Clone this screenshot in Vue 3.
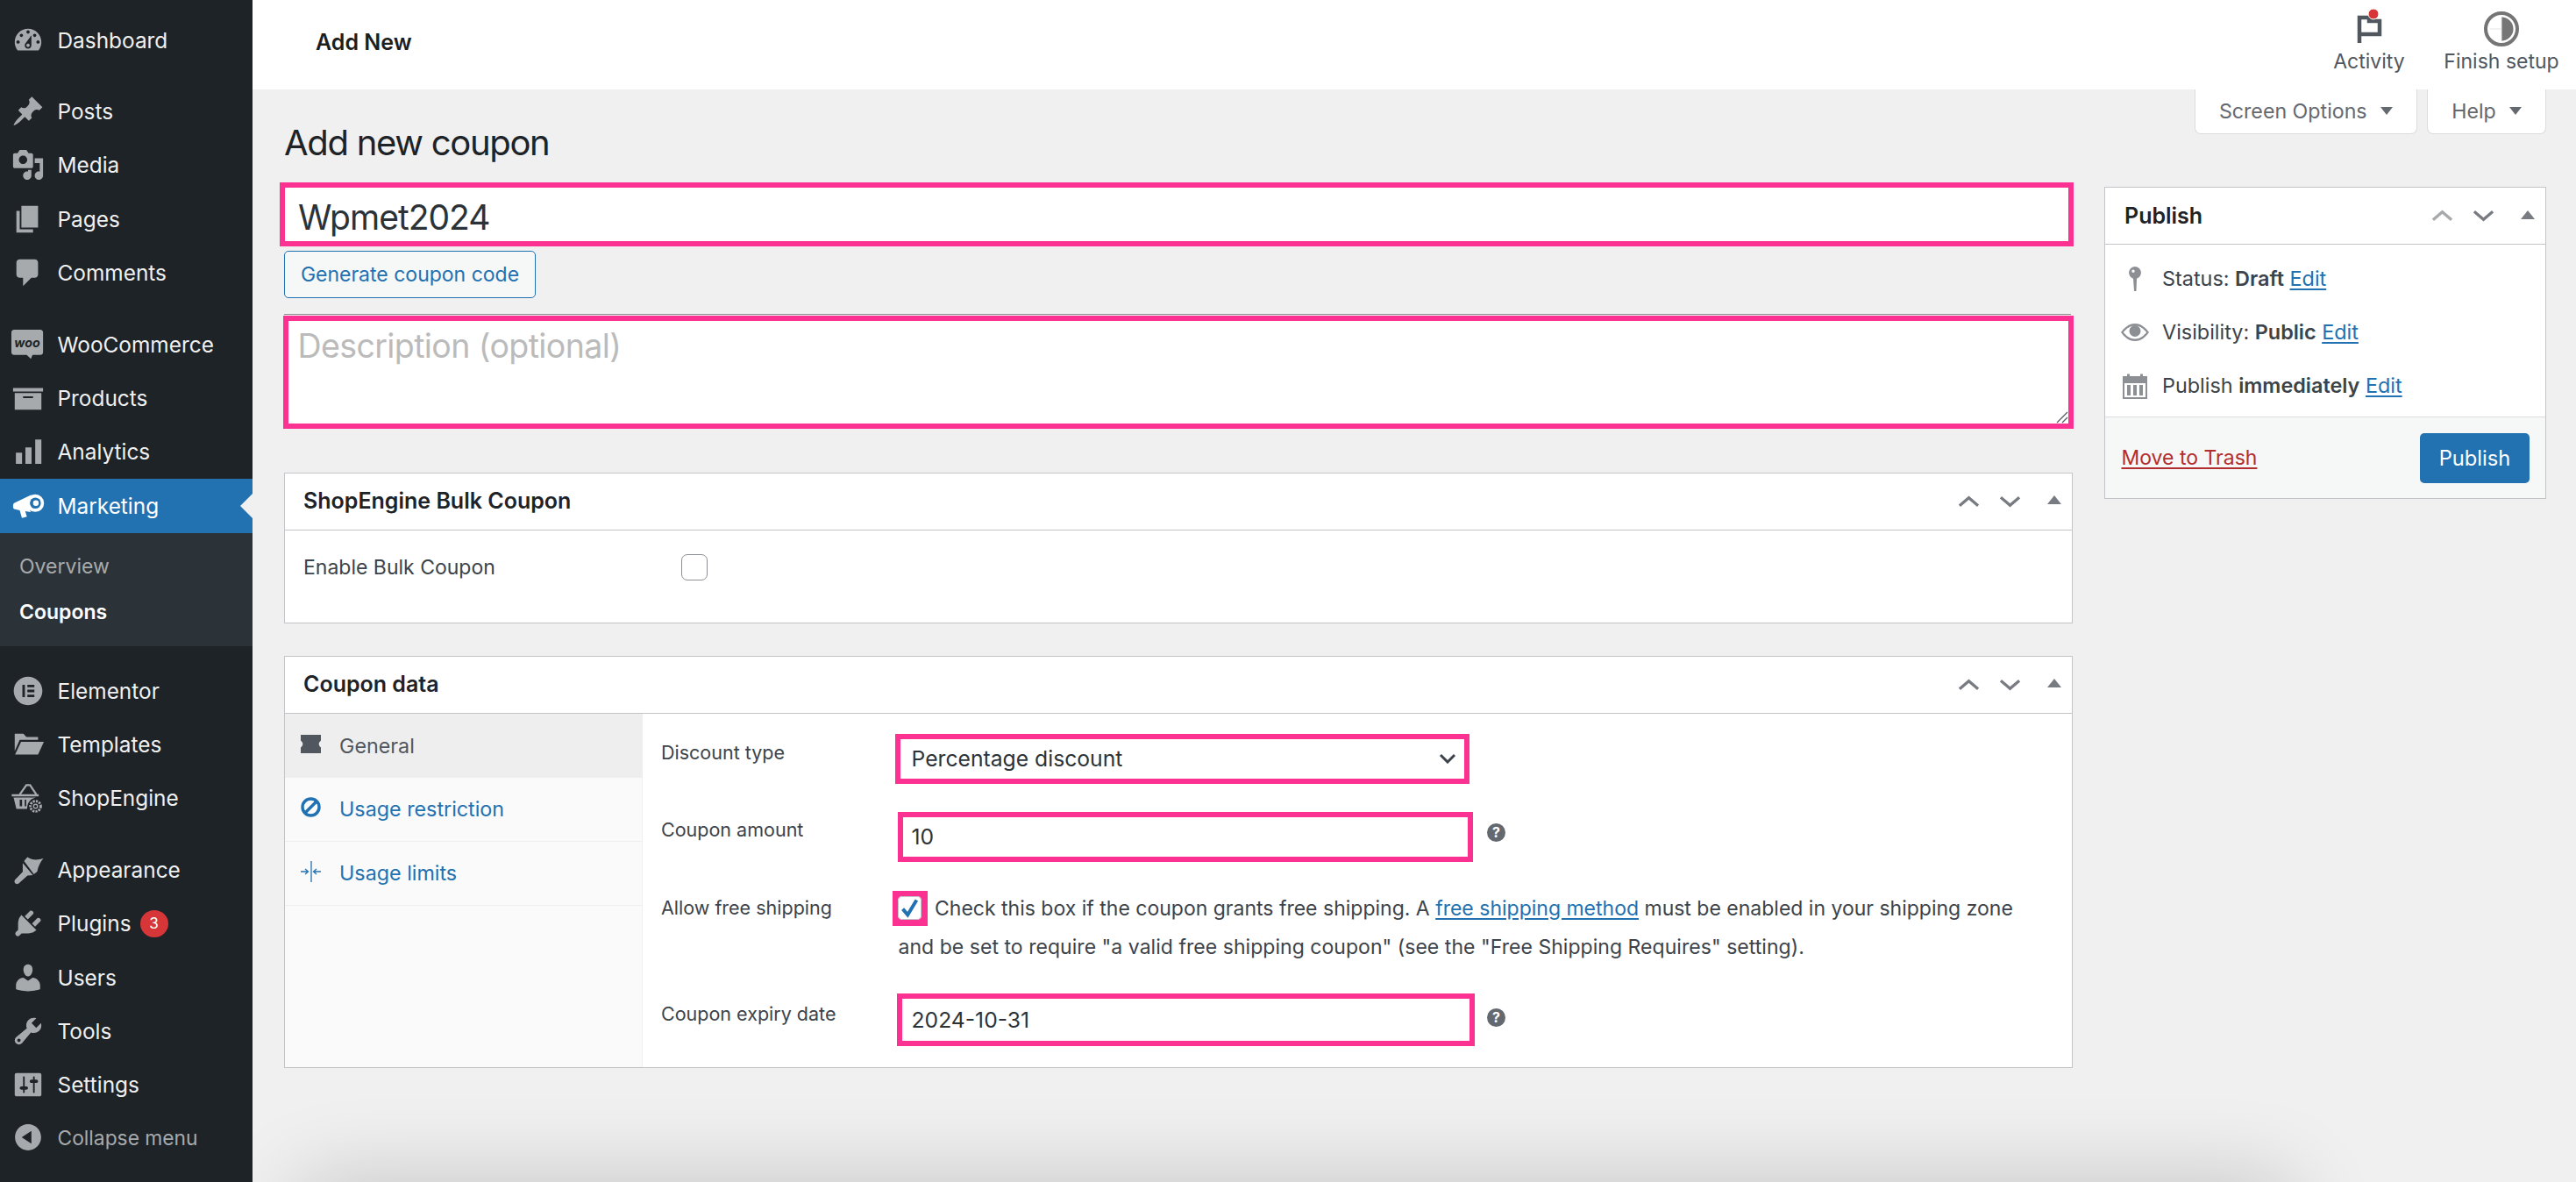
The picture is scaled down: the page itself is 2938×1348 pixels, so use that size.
<script setup>
const menu = [
  { label: 'Dashboard', d: 'M3.76 16h12.48c1.1-1.37 1.76-3.11 1.76-5 0-4.42-3.58-8-8-8s-8 3.58-8 8c0 1.89.66 3.63 1.76 5zM10 4c.55 0 1 .45 1 1s-.45 1-1 1-1-.45-1-1 .45-1 1-1zM6 6c.55 0 1 .45 1 1s-.45 1-1 1-1-.45-1-1 .45-1 1-1zm8 0c.55 0 1 .45 1 1s-.45 1-1 1-1-.45-1-1 .45-1 1-1zm-5.37 5.55L12 7v6c0 1.1-.9 2-2 2s-2-.9-2-2c0-.57.24-1.08.63-1.45zM4 10c.55 0 1 .45 1 1s-.45 1-1 1-1-.45-1-1 .45-1 1-1zm12 0c.55 0 1 .45 1 1s-.45 1-1 1-1-.45-1-1 .45-1 1-1zm-5 3c0-.55-.45-1-1-1s-1 .45-1 1 .45 1 1 1 1-.45 1-1z' },
  { label: 'Posts', sep: true, d: 'M10.44 3.02l1.82-1.82 6.36 6.35-1.83 1.82c-1.05-.68-2.48-.57-3.41.36l-.75.75c-.92.93-1.04 2.35-.35 3.41l-1.83 1.82-2.41-2.41-2.8 2.79c-.42.42-3.38 2.71-3.8 2.29s1.86-3.39 2.28-3.81l2.79-2.79L4.1 9.36l1.83-1.82c1.05.69 2.48.57 3.4-.36l.75-.75c.93-.92 1.05-2.35.36-3.41z' },
  { label: 'Media', d: 'M13 11V4c0-.55-.45-1-1-1h-1.67L9 1H5L3.67 3H2c-.55 0-1 .45-1 1v7c0 .55.45 1 1 1h10c.55 0 1-.45 1-1zM7 4.5c1.38 0 2.5 1.12 2.5 2.5S8.38 9.5 7 9.5 4.5 8.38 4.5 7 5.62 4.5 7 4.5zM14 6h5v10.5c0 1.38-1.12 2.5-2.5 2.5S14 17.88 14 16.5s1.12-2.5 2.5-2.5c.17 0 .34.02.5.05V9h-3V6zm-4 8.05V13h2v3.5c0 1.38-1.12 2.5-2.5 2.5S7 17.88 7 16.5 8.12 14 9.5 14c.17 0 .34.02.5.05z' },
  { label: 'Pages', d: 'M6 15V2h10v13H6zm-1 1h8v2H3V5h2v11z' },
  { label: 'Comments', d: 'M5 2h9c1.1 0 2 .9 2 2v7c0 1.1-.9 2-2 2h-2l-5 5v-5H5c-1.1 0-2-.9-2-2V4c0-1.1.9-2 2-2z' },
  { label: 'WooCommerce', sep: true, kind: 'woo' },
  { label: 'Products', d: 'M19 4v2H1V4h18zM2 7h16v10H2V7zm11 3V9H7v1h6z' },
  { label: 'Analytics', d: 'M2.7 10.6h3.7v6.8H2.7zM8.4 7.5h3.7v9.9H8.4zM14.3 2.8H18v14.6h-3.7z' },
  { label: 'Marketing', current: true, kind: 'mega' },
  { label: 'Elementor', sep: true, kind: 'elementor' },
  { label: 'Templates', d: 'M2 3.5h5.2l1.8 2h7v1.8H5L2 14zM5.8 8.4H19.5L16 16H2.2z' },
  { label: 'ShopEngine', kind: 'shop' },
  { label: 'Appearance', sep: true, d: 'M7.6 4.8 9.6 2.4c2.6 1.7 5.6 2 9.6.8-1.7 2-3.2 4.8-3.7 7.8l-2 1.6zM6.8 5.9l6.1 7.3-3.2.2-5.3 4.7c-1.4 1.2-3.4-.6-2.2-2.2l4.6-4.7z' },
  { label: 'Plugins', badge: '3', d: 'M13.11 4.36L9.87 7.6 8 5.73l3.24-3.24c.35-.34 1.05-.2 1.56.32.52.51.66 1.21.31 1.55zm-8 1.77l.91-1.12 9.01 9.01-1.19.84c-.71.71-2.63 1.16-3.82 1.16H6.14L4.9 17.26c-.59.59-1.54.59-2.12 0-.59-.58-.59-1.53 0-2.12l1.24-1.24v-3.88c0-1.13.4-3.19 1.09-3.89zm7.26 3.97l3.24-3.24c.34-.35 1.04-.21 1.55.31.52.51.66 1.21.31 1.55l-3.24 3.25z' },
  { label: 'Users', d: 'M10 9.25c-2.27 0-2.73-3.44-2.73-3.44C7 4.02 7.82 2 9.97 2c2.16 0 2.98 2.02 2.71 3.81 0 0-.41 3.44-2.68 3.44zm0 2.57L12.72 10c2.39 0 4.52 2.33 4.52 4.53v2.49s-3.65 1.13-7.24 1.13c-3.65 0-7.24-1.13-7.24-1.13v-2.49c0-2.25 1.94-4.48 4.47-4.48z' },
  { label: 'Tools', d: 'M16.68 9.77c-1.34 1.34-3.3 1.67-4.95.99l-5.41 6.52c-.99.99-2.59.99-3.58 0s-.99-2.59 0-3.57l6.52-5.42c-.68-1.65-.35-3.61.99-4.95 1.28-1.28 3.12-1.62 4.72-1.06l-2.89 2.89 2.82 2.82 2.86-2.87c.53 1.58.18 3.39-1.08 4.67zM3.81 16.21c.4.39 1.04.39 1.43 0 .4-.4.4-1.04 0-1.43-.39-.4-1.03-.4-1.43 0-.39.39-.39 1.03 0 1.43z' },
  { label: 'Settings', d: 'M18 16V4c0-.55-.45-1-1-1H3c-.55 0-1 .45-1 1v12c0 .55.45 1 1 1h14c.55 0 1-.45 1-1zM8 11h1c.55 0 1 .45 1 1s-.45 1-1 1H8v1.5c0 .28-.22.5-.5.5s-.5-.22-.5-.5V13H6c-.55 0-1-.45-1-1s.45-1 1-1h1V5.5c0-.28.22-.5.5-.5s.5.22.5.5V11zm5-2h-1c-.55 0-1-.45-1-1s.45-1 1-1h1V5.5c0-.28.22-.5.5-.5s.5.22.5.5V7h1c.55 0 1 .45 1 1s-.45 1-1 1h-1v5.5c0 .28-.22.5-.5.5s-.5-.22-.5-.5V9z' },
  { label: 'Collapse menu', muted: true, d: 'M10 2.16c4.33 0 7.84 3.51 7.84 7.84s-3.51 7.84-7.84 7.84S2.16 14.33 2.16 10 5.71 2.16 10 2.16zm2 11.72V6.12L6.18 9.97z' },
]
const panelTabs = [
  { label: 'General', kind: 'ticket', active: true },
  { label: 'Usage restriction', kind: 'block' },
  { label: 'Usage limits', kind: 'limit' },
]
</script>

<template>
  <div class="page">
    <aside class="sidebar">
      <template v-for="item in menu" :key="item.label">
        <div class="mitem" :class="{ sep: item.sep, current: item.current, muted: item.muted }">
          <svg class="micon" viewBox="0 0 20 20" aria-hidden="true">
            <path v-if="item.d" :d="item.d" fill-rule="evenodd" />
            <g v-else-if="item.kind === 'woo'">
              <path d="M1.6 1h15.800c.9 0 1.600.7 1.600 1.600v12c0 .9-.7 1.600-1.600 1.600h-4.700l-1 2.300-2.500-2.300H1.600C.7 16.200 0 15.500 0 14.600v-12C0 1.700.7 1 1.600 1z" />
              <text class="wootext" x="9.500" y="11.400" text-anchor="middle">woo</text>
            </g>
            <g v-else-if="item.kind === 'mega'">
              <path d="M1.600 8.300C.8 9 .8 11.200 1.600 11.900l3.400.7 1.300 4.700 3-.8-1-3.300 3.400.5C9.800 10.500 10 6.500 12 3.300z" />
              <circle cx="14.300" cy="8.300" r="5.300" />
              <circle cx="14.400" cy="8.300" r="3.300" fill="#2271b1" />
              <circle cx="14.700" cy="8.300" r="1.700" />
            </g>
            <g v-else-if="item.kind === 'elementor'">
              <path fill-rule="evenodd" d="M10 1.500c4.700 0 8.600 3.800 8.600 8.500s-3.900 8.500-8.600 8.500S1.400 14.700 1.400 10 5.300 1.500 10 1.500zM6.600 6.300v7.400h1.500V6.300zm3 0v1.500h4.200V6.300zm0 2.950v1.500h4.200v-1.500zm0 2.950v1.500h4.200v-1.500z" />
            </g>
            <g v-else-if="item.kind === 'shop'">
              <path d="M5 8 9 2.300h2.200L15 8" fill="none" stroke="#a7aaad" stroke-width="1.200" />
              <path d="M.2 7.800h16.200v1.300H.2zM1.300 9.800h13.400c-2.600.4-4.700 2.500-5.100 5.200l-.2 1.600H3z" />
              <path d="M5 11h1.400v4H5zM8 11h.9v4H8z" fill="#1d2327" />
              <circle cx="14.500" cy="15" r="3.100" fill="none" stroke="#a7aaad" stroke-width="1.500" stroke-dasharray="1.200 .6" />
              <circle cx="14.500" cy="15" r="1.200" fill="none" stroke="#a7aaad" stroke-width=".7" />
            </g>
          </svg>
          <span class="mlabel">{{ item.label }}</span>
          <span v-if="item.badge" class="badge">{{ item.badge }}</span>
          <i v-if="item.current" class="pointer"></i>
        </div>
        <div v-if="item.current" class="submenu">
          <div class="sub">Overview</div>
          <div class="sub on">Coupons</div>
        </div>
      </template>
    </aside>

    <main class="main">
      <header class="topbar">
        <strong class="crumb">Add New</strong>
        <div class="tools">
          <div class="tool tool-a">
            <svg class="ticon" viewBox="0 0 40 40" aria-hidden="true">
              <path d="M9 36V7H20V11H32V26H9" fill="none" stroke="#50575e" stroke-width="4.500" />
              <circle cx="25" cy="3" r="6" fill="#d63638" stroke="#fff" stroke-width="1" />
            </svg>
            <span>Activity</span>
          </div>
          <div class="tool tool-b">
            <svg class="ticon" viewBox="0 0 40 40" aria-hidden="true">
              <circle cx="20" cy="20" r="18" fill="#fff" stroke="#757575" stroke-width="4" />
              <path d="M20 6.500a13.500 13.500 0 0 1 0 27z" fill="#757575" />
              <path d="M7 20h13M20 7v26" stroke="#e4e4e4" stroke-width="1" />
            </svg>
            <span>Finish setup</span>
          </div>
        </div>
      </header>

      <div class="head-row">
        <h1 class="title">Add new coupon</h1>
        <div class="meta-tabs">
          <div class="meta-tab tab-screen">Screen Options<i class="tri-down"></i></div>
          <div class="meta-tab tab-help">Help<i class="tri-down"></i></div>
        </div>
      </div>

      <div class="columns">
        <section class="left">
          <div class="pink code-input">Wpmet2024</div>
          <button class="gen-btn">Generate coupon code</button>
          <div class="desc-line">
            <div class="pink desc-input">
              Description (optional)
              <svg class="grip" viewBox="0 0 14 14" aria-hidden="true">
                <path d="M1 13 13 1M7 13l6-6" stroke="#50575e" stroke-width="1.200" fill="none" />
              </svg>
            </div>
          </div>

          <div class="panel panel-bulk">
            <div class="phead">
              <h2>ShopEngine Bulk Coupon</h2>
              <div class="pctrl">
                <svg class="chev" viewBox="0 0 26 14"><path d="M2 12 13 2.500 24 12" /></svg>
                <svg class="chev" viewBox="0 0 26 14"><path d="M2 2 13 11.500 24 2" /></svg>
                <i class="tri-up"></i>
              </div>
            </div>
            <div class="bulk-row">
              <span class="bulk-label">Enable Bulk Coupon</span>
              <span class="check-empty"></span>
            </div>
          </div>

          <div class="panel panel-data">
            <div class="phead">
              <h2>Coupon data</h2>
              <div class="pctrl">
                <svg class="chev" viewBox="0 0 26 14"><path d="M2 12 13 2.500 24 12" /></svg>
                <svg class="chev" viewBox="0 0 26 14"><path d="M2 2 13 11.500 24 2" /></svg>
                <i class="tri-up"></i>
              </div>
            </div>
            <div class="data-body">
              <nav class="dtabs">
                <div v-for="t in panelTabs" :key="t.label" class="dtab" :class="{ active: t.active }">
                  <svg class="dicon" viewBox="0 0 23 23" aria-hidden="true">
                    <path v-if="t.kind === 'ticket'" d="M0 1h23v6.500q-4.500 4 0 8V22H0v-6.500q4.500-4 0-8z" fill="#50575e" />
                    <g v-else-if="t.kind === 'block'" fill="none" stroke="#2271b1" stroke-width="3.400">
                      <circle cx="11.500" cy="11.500" r="9.500" />
                      <path d="M5 18 18 5" />
                    </g>
                    <g v-else fill="none" stroke="#2271b1" stroke-width="1.300">
                      <path d="M12 0v24M0 12h8M5 9l3.500 3L5 15M23 12h-8M18 9l-3.500 3 3.500 3" />
                    </g>
                  </svg>
                  <span>{{ t.label }}</span>
                </div>
              </nav>
              <div class="fields">
                <div class="row row-type">
                  <label>Discount type</label>
                  <div class="pink f-select">
                    <span>Percentage discount</span>
                    <svg class="sel-chev" viewBox="0 0 20 12"><path d="M2 2 10 10l8-8" /></svg>
                  </div>
                </div>
                <div class="row row-amount">
                  <label>Coupon amount</label>
                  <div class="pink f-amount">10</div>
                  <span class="help">?</span>
                </div>
                <div class="row row-ship">
                  <label>Allow free shipping</label>
                  <div class="ship-field">
                    <div class="ship-line">
                      <span class="pink f-check">
                        <svg viewBox="0 0 24 24"><path d="M5 13l5 6L19 4" /></svg>
                      </span>
                      <span>Check this box if the coupon grants free shipping. A <a>free shipping method</a> must be enabled in your shipping zone</span>
                    </div>
                    <div class="ship-line2">and be set to require "a valid free shipping coupon" (see the "Free Shipping Requires" setting).</div>
                  </div>
                </div>
                <div class="row row-date">
                  <label>Coupon expiry date</label>
                  <div class="pink f-date">2024-10-31</div>
                  <span class="help">?</span>
                </div>
              </div>
            </div>
          </div>
        </section>

        <aside class="right">
          <div class="panel publish">
            <div class="phead">
              <h2>Publish</h2>
              <div class="pctrl">
                <svg class="chev light" viewBox="0 0 26 14"><path d="M2 12 13 2.500 24 12" /></svg>
                <svg class="chev" viewBox="0 0 26 14"><path d="M2 2 13 11.500 24 2" /></svg>
                <i class="tri-up"></i>
              </div>
            </div>
            <div class="pub-body">
              <div class="pub-row">
                <svg class="pub-icon" viewBox="0 0 32 32" aria-hidden="true">
                  <path fill-rule="evenodd" d="M16 2a7 7 0 0 1 2 13.700L17.500 30h-2.500L14 15.700A7 7 0 0 1 16 2zm-2 3.500a1.700 1.700 0 1 0 0 3.400 1.700 1.700 0 0 0 0-3.400z" />
                </svg>
                <span>Status: <b>Draft</b> <a>Edit</a></span>
              </div>
              <div class="pub-row">
                <svg class="pub-icon" viewBox="0 0 32 32" aria-hidden="true">
                  <path fill-rule="evenodd" d="M16 6c7 0 12.500 5 16 10-3.500 5-9 10-16 10S3.500 21 0 16C3.500 11 9 6 16 6zm0 2.500C10.500 8.500 6 12 2.800 16 6 20 10.500 23.500 16 23.500S26 20 29.200 16C26 12 21.500 8.500 16 8.500z" />
                  <circle cx="16" cy="14.500" r="6.500" />
                </svg>
                <span>Visibility: <b>Public</b> <a>Edit</a></span>
              </div>
              <div class="pub-row">
                <svg class="pub-icon" viewBox="0 0 32 32" aria-hidden="true">
                  <path fill-rule="evenodd" d="M2 5h5V2.500h3V5h12V2.500h3V5h5v26H2zm2 8v16h24V13zM7 15h4v12H7zm7 0h4v12h-4zm7 0h4v12h-4z" />
                </svg>
                <span>Publish <b>immediately</b> <a>Edit</a></span>
              </div>
            </div>
            <div class="pub-foot">
              <a class="trash">Move to Trash</a>
              <button class="pub-btn">Publish</button>
            </div>
          </div>
        </aside>
      </div>
      <div class="edge-shadow"></div>
    </main>
  </div>
</template>

<style scoped>
.page { width: 2938px; height: 1348px; display: flex; overflow: hidden; background: #f0f0f1; font-family: Inter, "Liberation Sans", sans-serif; color: #3c434a; }
h1, h2 { margin: 0; }
a { color: #2271b1; text-decoration: underline; text-underline-offset: 3px; }

.sidebar { width: 288px; flex: none; height: 1348px; background: #1d2327; padding-top: 15px; box-sizing: border-box; }
.mitem { position: relative; display: flex; align-items: center; height: 61.4px; padding-left: 13px; color: #f0f0f1; font-size: 24.400px; }
.mitem.sep { margin-top: 20px; }
.micon { width: 38px; height: 38px; flex: none; fill: #a7aaad; margin-right: 14.500px; }
.mitem.current { background: #2271b1; color: #fff; }
.mitem.current .micon { fill: #fff; }
.mitem.muted { color: #a7aaad; font-size: 22.800px; }
.wootext { font: italic 700 7.500px Inter, sans-serif; fill: #1d2327; }
.pointer { position: absolute; right: 0; top: 17px; width: 0; height: 0; border: 14px solid transparent; border-right-color: #f0f0f1; border-left: 0; }
.badge { margin-left: 10px; width: 32px; height: 31px; border-radius: 50%; background: #d63638; color: #fff; font-size: 17px; display: flex; align-items: center; justify-content: center; }
.submenu { height: 129px; background: #2c3338; padding-top: 13px; box-sizing: border-box; }
.sub { height: 50px; line-height: 50px; padding-left: 22px; font-size: 23px; color: #a7aaad; }
.sub.on { color: #fff; font-weight: 600; margin-top: 2px; }
.submenu + .mitem.sep { margin-top: 20.500px; }
.submenu + .mitem.sep ~ .mitem.muted { margin-top: -1.500px; }

.main { position: relative; flex: 1; min-width: 0; overflow: hidden; }
.topbar { height: 102px; background: #fff; display: flex; justify-content: space-between; }
.crumb { margin: 31px 0 0 72px; font-size: 25px; line-height: 34px; font-weight: 600; color: #1e1e1e; }
.tools { display: flex; padding-right: 14px; }
.tool { display: flex; flex-direction: column; align-items: center; font-size: 23px; color: #50575e; padding-top: 13px; box-sizing: border-box; }
.tool span { margin-top: 2px; line-height: 30px; }
.tool-a { width: 120px; margin-right: 20px; }
.tool-b { width: 142px; }
.ticon { width: 40px; height: 40px; overflow: visible; }

.head-row { height: 106px; display: flex; justify-content: space-between; padding: 0 34px 0 36px; }
.title { margin-top: 37px; font-size: 40px; line-height: 48px; font-weight: 400; color: #1d2327; letter-spacing: -1.300px; }
.meta-tabs { display: flex; gap: 11px; align-items: flex-start; }
.meta-tab { height: 51px; padding-bottom: 1px; background: #fff; border: 1.500px solid #dcdcde; border-top: 0; border-radius: 0 0 7px 7px; box-sizing: border-box; display: flex; align-items: center; justify-content: center; font-size: 23.200px; color: #646970; }
.tab-screen { width: 254.500px; }
.tab-help { width: 136px; }
.tri-down { width: 0; height: 0; margin-left: 15px; border-left: 7px solid transparent; border-right: 7px solid transparent; border-top: 9px solid #646970; }

.columns { display: flex; padding-left: 36px; }
.left { width: 2040px; flex: none; }
.right { width: 504px; margin-left: 36px; padding-top: 5px; }

.pink { border: 6.500px solid #fb3291; box-sizing: border-box; background: #fff; }
.code-input { margin-left: -5px; width: 2046px; height: 73px; padding: 4px 0 0 15px; font-size: 39px; line-height: 60px; letter-spacing: -1px; color: #2c3338; }
.gen-btn { display: block; margin-top: 5px; width: 287px; height: 54px; border: 1.500px solid #2271b1; border-radius: 5px; background: #f6f7f7; color: #2271b1; font: 400 23px Inter, sans-serif; padding: 0; }
.desc-line { margin-top: 18px; margin-right: 2px; border-top: 1.500px solid #8c8f94; height: 130.500px; box-sizing: border-box; }
.desc-input { position: relative; margin: .500px 0 0 -1px; width: 2042px; height: 129px; padding: 5px 0 0 10.500px; font-size: 37.500px; line-height: 48px; letter-spacing: -.6px; color: #bbb; }
.grip { position: absolute; right: 0; bottom: 0; width: 14px; height: 14px; }

.panel { background: #fff; border: 1.500px solid #c3c4c7; box-sizing: border-box; }
.panel-bulk { margin-top: 50px; height: 172px; }
.panel-data { margin-top: 37px; height: 470px; }
.phead { height: 64px; padding-bottom: 0; border-bottom: 1.500px solid #c3c4c7; box-sizing: content-box; display: flex; align-items: center; justify-content: space-between; padding-left: 21px; padding-right: 10px; }
.phead h2 { font-size: 25px; line-height: 32px; margin-top: -2px; font-weight: 600; color: #1d2327; }
.publish .phead h2 { margin-top: 0; }
.pctrl { display: flex; align-items: center; }
.chev { width: 25px; height: 14px; margin-right: 22px; fill: none; stroke: #787c82; stroke-width: 3.400px; }
.chev.light { stroke: #a7aaad; }
.tri-up { width: 0; height: 0; margin-left: 8px; margin-right: 2px; margin-top: -3px; border-left: 8px solid transparent; border-right: 8px solid transparent; border-bottom: 10px solid #787c82; }
.bulk-row { display: flex; align-items: center; height: 84px; padding-top: 1px; box-sizing: border-box; padding-left: 21px; font-size: 23px; }
.bulk-label { width: 431px; }
.check-empty { width: 30px; height: 30px; border: 1.500px solid #8c8f94; border-radius: 7px; box-sizing: border-box; background: #fff; }

.data-body { display: flex; height: 403px; }
.dtabs { width: 408px; flex: none; background: #fafafa; border-right: 1.500px solid #eee; box-sizing: border-box; }
.dtab { height: 73px; display: flex; align-items: center; padding-left: 18px; border-bottom: 1.500px solid #eee; box-sizing: border-box; font-size: 23.300px; color: #2271b1; }
.dtab.active { background: #eee; color: #50575e; border-bottom: 0; }
.dicon { width: 23px; height: 23px; flex: none; margin: -4px 21px 0 0; overflow: visible; }

.fields { flex: 1; padding-left: 21px; }
.row { display: flex; align-items: flex-start; font-size: 23px; }
.row label { width: 264px; flex: none; font-size: 21.500px; line-height: 30px; color: #3c434a; }
.row-type { margin-top: 23px; height: 57px; }
.row-type label { margin-top: 6px; }
.row-amount { margin-top: 32px; height: 57px; }
.row-amount label { margin-top: 5px; }
.row-ship { margin-top: 33px; }
.row-ship label { margin-top: 4px; }
.row-date { margin-top: 30px; height: 60px; }
.row-date label { margin-top: 8px; }
.f-select, .f-amount, .f-date { display: flex; align-items: center; color: #2c3338; font-size: 24.700px; }
.f-select { margin-left: 3px; width: 655px; height: 57px; padding: 0 9px 0 12.500px; justify-content: space-between; }
.f-amount { margin-left: 5.500px; width: 656.500px; height: 57px; padding-left: 10px; }
.f-date { margin-left: 4.500px; width: 659px; height: 60px; padding-left: 11px; }
.sel-chev { width: 20px; height: 12px; fill: none; stroke: #3c434a; stroke-width: 3px; }
.help { width: 21px; height: 21px; border-radius: 50%; background: #646970; color: #fff; font-size: 16px; font-weight: 700; line-height: 21px; text-align: center; flex: none; margin-left: 16px; margin-top: 13.500px; }
.row-date .help { margin-left: 14.500px; margin-top: 16.500px; }
.ship-line { display: flex; align-items: center; height: 40px; }
.f-check { width: 40px; height: 40px; margin-right: 8px; display: block; background: #fb3291; }
.f-check svg { display: block; width: 27px; height: 27px; background: #fff; border-radius: 5px; box-shadow: inset 0 0 0 1px #c3c4c7; fill: none; stroke: #2271b1; stroke-width: 3.500px; }
.ship-line2 { margin: 1.500px 0 0 6.500px; line-height: 46px; letter-spacing: .04px; }

.pub-body { height: 196px; padding-top: 8px; box-sizing: border-box; }
.publish .phead { padding-left: 22px; }
.pub-row { height: 61px; display: flex; align-items: center; padding-left: 18px; font-size: 23.400px; }
.pub-icon { width: 32px; height: 32px; fill: #8c8f94; margin-right: 15px; flex: none; }
.pub-row b { font-weight: 600; }
.pub-foot { height: 93px; border-top: 1.500px solid #dcdcde; background: #f6f7f7; display: flex; align-items: center; justify-content: space-between; padding: 0 18px 0 18.500px; box-sizing: border-box; }
.trash { color: #b32d2e; font-size: 23px; }
.pub-btn { width: 125px; height: 57px; border: 0; border-radius: 5px; background: #2271b1; color: #fff; font: 400 23.700px Inter, sans-serif; padding: 0; }

.edge-shadow { position: absolute; left: 55px; width: 2270px; top: 1350px; height: 100px; box-shadow: 0 0 100px rgba(0, 0, 0, .2); }
</style>

<style>
html, body { margin: 0; padding: 0; background: #f0f0f1; }
</style>
